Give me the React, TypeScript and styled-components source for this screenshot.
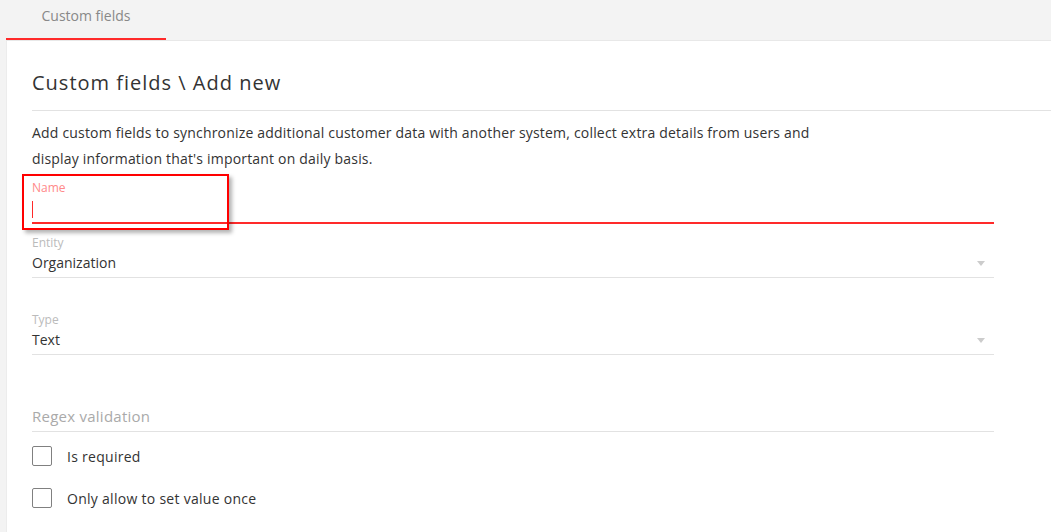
import React from "react";
import styled, { createGlobalStyle } from "styled-components";

const Global = createGlobalStyle`
  html, body { margin: 0; padding: 0; background: #f3f3f3; }
  body { font-family: "Open Sans", "Liberation Sans", Arial, sans-serif; color: #333; }
  #root { min-height: 532px; }
`;

const Page = styled.div`
  display: flex;
  flex-direction: column;
  height: 532px;
  overflow: hidden;
`;

const TabBar = styled.div`
  display: flex;
  height: 40px;
  padding-left: 6px;
  background: #f3f3f3;
`;

const Tab = styled.div<{ $active?: boolean }>`
  box-sizing: border-box;
  width: 160px;
  height: 40px;
  display: flex;
  align-items: center;
  justify-content: center;
  padding-bottom: 7px;
  font-size: 14px;
  color: #888;
  border-bottom: 2px solid ${(p) => (p.$active ? "#ff2a2a" : "transparent")};
`;

const Card = styled.div`
  position: relative;
  flex: 1;
  margin-left: 6px;
  background: #fff;
  border-top: 1px solid #e8e8e8;
  border-left: 1px solid #ececec;
  padding: 28px 0 0 25px;
`;

const Title = styled.h1`
  margin: 0;
  font-size: 20px;
  font-weight: 400;
  line-height: 28px;
  letter-spacing: 1px;
  color: #333;
  padding-bottom: 13px;
  border-bottom: 1px solid #e2e2e2;
`;

const Description = styled.p`
  margin: 9px 0 0;
  max-width: 800px;
  font-size: 14px;
  line-height: 26px;
  letter-spacing: 0.19px;
  color: #333;
`;

const Form = styled.div`
  width: 962px;
  display: flex;
  flex-direction: column;
`;

const Field = styled.div<{ $top: number; $focused?: boolean }>`
  position: relative;
  margin-top: ${(p) => p.$top}px;
  border-bottom: ${(p) => (p.$focused ? "2px solid #ff2a2a" : "1px solid #e2e2e2")};
`;

const Label = styled.div<{ $focused?: boolean }>`
  height: 16px;
  font-size: 12px;
  line-height: 16px;
  color: ${(p) => (p.$focused ? "#ff8a8a" : "#bbb")};
`;

const Value = styled.div<{ $h: number; $placeholder?: boolean }>`
  box-sizing: border-box;
  display: flex;
  align-items: center;
  height: ${(p) => p.$h}px;
  padding-bottom: 4px;
  font-size: ${(p) => (p.$placeholder ? "15px" : "14px")};
  letter-spacing: ${(p) => (p.$placeholder ? "0.25px" : "0")};
  color: ${(p) => (p.$placeholder ? "#aaa" : "#333")};
`;

const Caret = styled.span`
  display: block;
  width: 1px;
  height: 17px;
  margin-top: 5px;
  background: #ff2a2a;
`;

const Arrow = styled.span`
  position: absolute;
  right: 9px;
  top: 26px;
  width: 0;
  height: 0;
  border-left: 4.5px solid transparent;
  border-right: 4.5px solid transparent;
  border-top: 5px solid #ccc;
`;

const CheckRow = styled.label<{ $top: number }>`
  display: flex;
  align-items: center;
  gap: 15px;
  margin-top: ${(p) => p.$top}px;
  font-size: 14px;
  letter-spacing: 0.28px;
  color: #333;
`;

const Box = styled.span`
  box-sizing: border-box;
  width: 20px;
  height: 20px;
  border: 1px solid #808080;
  border-radius: 2px;
  background: #fff;
`;

const Highlight = styled.div`
  position: absolute;
  left: 15px;
  top: 133px;
  width: 207px;
  height: 56px;
  box-sizing: border-box;
  border: 2px solid #f00;
  box-shadow: 3px 3px 4px rgba(0, 0, 0, 0.3);
  pointer-events: none;
`;

export default function App() {
  return (
    <Page>
      <Global />
      <TabBar>
        <Tab $active>Custom fields</Tab>
      </TabBar>
      <Card>
        <Title>Custom fields \ Add new</Title>
        <Description>
          Add custom fields to synchronize additional customer data with another system, collect extra details from users and display information that's important on daily basis.
        </Description>
        <Form>
          <Field $top={8} $focused>
            <Label $focused>Name</Label>
            <Value $h={26}>
              <Caret />
            </Value>
          </Field>
          <Field $top={11}>
            <Label>Entity</Label>
            <Value $h={26}>Organization</Value>
            <Arrow />
          </Field>
          <Field $top={34}>
            <Label>Type</Label>
            <Value $h={26}>Text</Value>
            <Arrow />
          </Field>
          <Field $top={33}>
            <Label />
            <Value $h={27} $placeholder>Regex validation</Value>
          </Field>
          <CheckRow $top={14}>
            <Box />
            Is required
          </CheckRow>
          <CheckRow $top={22}>
            <Box />
            Only allow to set value once
          </CheckRow>
        </Form>
        <Highlight />
      </Card>
    </Page>
  );
}
